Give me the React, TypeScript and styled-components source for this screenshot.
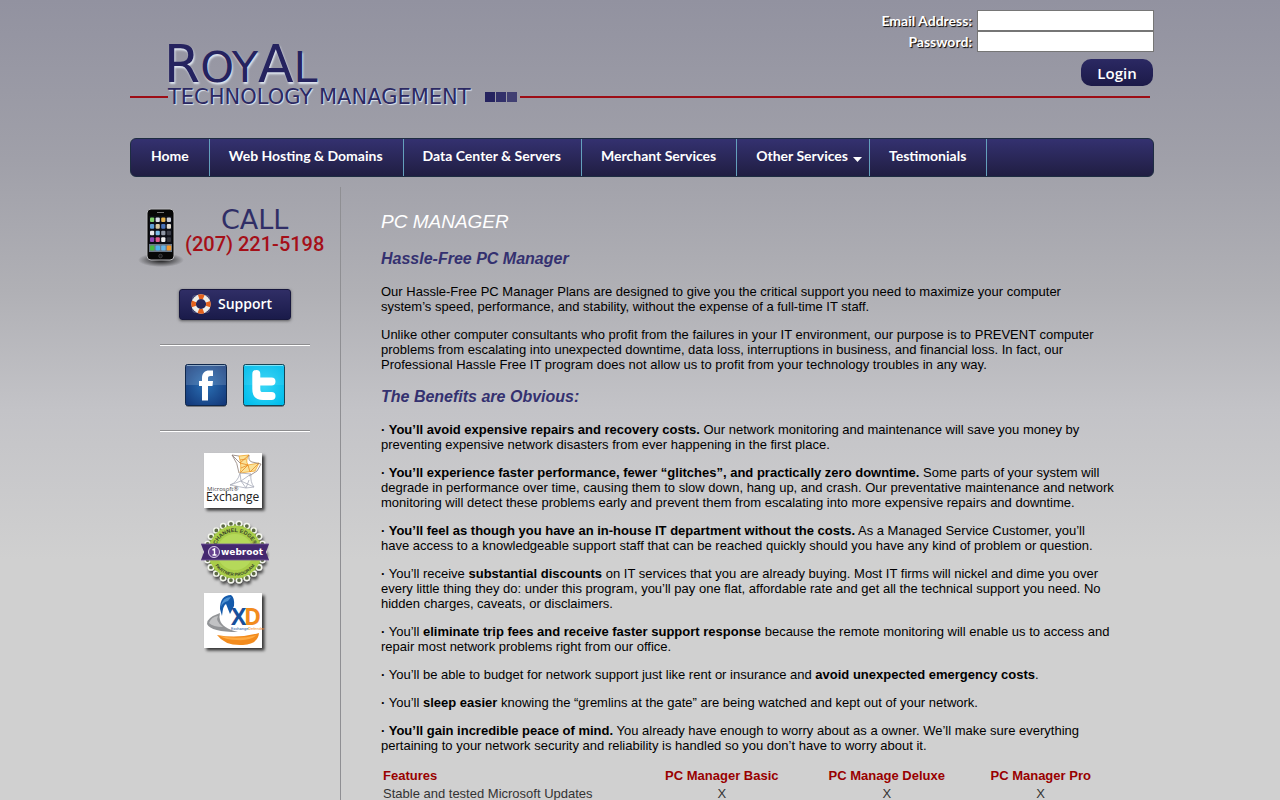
import React from "react";
import styled, { createGlobalStyle } from "styled-components";

const GlobalStyle = createGlobalStyle`
  * { box-sizing: border-box; }
  html { background: #d0d0d0; }
  body {
    margin: 0;
    background: linear-gradient(#9292a0 0, #a0a0a9 160px, #b0b0b5 290px, #c3c3c7 410px, #d0d0d0 560px) no-repeat;
    font: 13px/15px "Liberation Sans", Arial, sans-serif;
    color: #000;
  }
`;

const Shell = styled.div`
  max-width: 1020px;
  margin: 0 auto;
`;

const Header = styled.header`
  display: grid;
  height: 138px;
  > * { grid-area: 1 / 1; }
`;

const Brand = styled.div`
  padding-top: 40px;
`;

const Royal = styled.div`
  padding-left: 34px;
  height: 48px;
  font: 43px/48px "DejaVu Sans", sans-serif;
  color: #25235f;
  text-shadow: 1px 2px 2px #dfe6f0;
  span { font-size: 52px; }
`;

const TagRow = styled.div`
  display: flex;
  align-items: center;
  height: 18px;
`;

const Rule = styled.span<{ $fill?: boolean }>`
  flex: ${(p) => (p.$fill ? "1" : "0 0 38px")};
  height: 2px;
  background: #9d0d15;
`;

const Tagline = styled.span`
  flex: 0 0 317px;
  white-space: nowrap;
  font: 21px/18px "DejaVu Sans", sans-serif;
  color: #2b2963;
  text-shadow: 1px 1px 1px #dfe6f0;
`;

const Squares = styled.span`
  display: flex;
  gap: 1px;
  margin-right: 3px;
  i { width: 10px; height: 10px; background: #25235f; }
  i:nth-child(2) { background: #32306a; }
  i:nth-child(3) { background: #413f72; }
`;

const LoginForm = styled.form`
  justify-self: end;
  align-self: start;
  display: grid;
  grid-template-columns: auto 177px;
  column-gap: 5px;
  margin: 10px -4px 0 0;
`;

const Label = styled.label`
  text-align: right;
  font: bold 14px/21px Lato, sans-serif;
  color: #fff;
  text-shadow: 1px 1px 1px #000;
`;

const Field = styled.input`
  width: 100%;
  height: 21px;
  border: 1px solid #767676;
  background: #fff;
  padding: 1px 2px;
`;

const LoginButton = styled.button`
  grid-column: 2;
  justify-self: end;
  width: 72px;
  height: 27px;
  margin: 7px 1px 0 0;
  padding: 0;
  border: 0;
  border-radius: 10px;
  background: linear-gradient(#2b2963, #1c1a48);
  color: #fff;
  font: 600 15px/26px "Open Sans", sans-serif;
`;

const Nav = styled.nav`
  display: flex;
  height: 39px;
  margin-right: -4px;
  border: 1px solid #1e2d42;
  border-radius: 6px;
  background: linear-gradient(#343170, #201e42);
`;

const NavLink = styled.a<{ $menu?: boolean }>`
  display: flex;
  align-items: center;
  gap: 5px;
  height: 37px;
  padding: 0 ${(p) => (p.$menu ? "7px" : "20px")} 3px 19px;
  border-right: 1px solid #64a0bd;
  color: #fff;
  text-decoration: none;
  white-space: nowrap;
  font: bold 14px/20px Lato, sans-serif;
  &:first-child { padding-left: 20px; }
  svg { margin-top: 6px; }
`;

const Columns = styled.div`
  display: flex;
  min-height: 613px;
  padding-top: 10px;
`;

const Sidebar = styled.aside`
  flex: 0 0 211px;
  display: flex;
  flex-direction: column;
  align-items: center;
  border-right: 1px solid #8f8f93;
  padding-top: 21px;
`;

const CallBox = styled.div`
  display: flex;
  align-items: flex-start;
  height: 59px;
  width: 194px;
  > svg { flex: none; }
`;

const CallText = styled.div`
  text-align: center;
  color: #302e66;
  font: 27px/24px "DejaVu Sans", sans-serif;
  white-space: nowrap;
  strong {
    display: block;
    color: #a50f18;
    font: 500 20px/24px Roboto, sans-serif;
  }
`;

const SupportButton = styled.button`
  display: flex;
  align-items: center;
  gap: 7px;
  width: 112px;
  height: 31px;
  margin: 22px 0 24px;
  padding: 0 11px 1px;
  border: 1px solid #17173d;
  border-radius: 3px;
  background: linear-gradient(#302e66, #1a1b4a);
  box-shadow: 0 1px 3px rgba(0, 0, 0, 0.5);
  color: #fff;
  font: 600 14px/20px "Open Sans", sans-serif;
`;

const Separator = styled.hr`
  width: 150px;
  height: 2px;
  margin: 0;
  border: 0;
  border-top: 1px solid #8d8d8f;
  background: #fff;
`;

const Social = styled.div`
  display: flex;
  gap: 16px;
  margin: 18px 0 22px;
  a { display: block; width: 42px; height: 44px; }
  svg { display: block; }
`;

const Partners = styled.div`
  display: flex;
  flex-direction: column;
  align-items: center;
  margin-top: 18px;
  svg { display: block; }
`;

const Main = styled.main`
  flex: 1;
  padding: 23px 36px 0 40px;
`;

const Title = styled.h1`
  margin: 0 0 16px;
  font: italic 19px/24px "Liberation Sans", Arial, sans-serif;
  color: #fff;
`;

const Subtitle = styled.h2`
  margin: 16px 0;
  font: italic bold 16px/18px "Liberation Sans", Arial, sans-serif;
  color: #343170;
`;

const Text = styled.p`
  margin: 0 0 13px;
`;

const Features = styled.table`
  width: 100%;
  table-layout: fixed;
  border-collapse: collapse;
  color: #333;
  th, td { height: 18px; padding: 0 2px; text-align: center; }
  th { color: #990000; }
  th:first-child, td:first-child { width: 35%; text-align: left; }
  th:nth-child(2) { width: 23%; }
  th:nth-child(3) { width: 22%; }
`;

const appColors = [
  "#7fcf6a", "#d9dde8", "#e6b34d", "#c8ced9",
  "#5f9fd8", "#d8c9a0", "#4a73b8", "#e2ddd0",
  "#e8e8ea", "#7cbde8", "#8f96a3", "#3c3f49",
  "#8d46b4", "#e05a8c", "#f0f0f0", "#31343c",
];

const PhoneIcon = () => (
  <svg width="47" height="60" viewBox="0 0 47 60" aria-hidden="true">
    <defs>
      <radialGradient id="phoneShadow">
        <stop offset="0" stopColor="#000" stopOpacity="0.9" />
        <stop offset="1" stopColor="#000" stopOpacity="0" />
      </radialGradient>
    </defs>
    <ellipse cx="23" cy="52" rx="23" ry="7" fill="url(#phoneShadow)" />
    <rect x="9" y="1" width="27" height="51" rx="4" fill="#070707" stroke="#b9b9bd" />
    <rect x="19" y="4" width="7" height="1" fill="#777" />
    <rect x="11" y="8" width="23" height="36" fill="#0d0f16" />
    {appColors.map((c, i) => (
      <rect key={i} x={12 + (i % 4) * 5.6} y={9.5 + Math.floor(i / 4) * 6.6} width="4.2" height="4.6" rx="1" fill={c} />
    ))}
    <rect x="11" y="36" width="23" height="8" fill="#6b7887" />
    {["#48ba40", "#4db1ee", "#65b5e8", "#f39a2c"].map((c, i) => (
      <rect key={c} x={12 + i * 5.6} y="37.5" width="4.4" height="5" rx="1" fill={c} />
    ))}
    <circle cx="22.5" cy="48" r="1.8" fill="#17181c" stroke="#555" strokeWidth="0.6" />
  </svg>
);

const LifeRing = () => (
  <svg width="20" height="20" viewBox="0 0 20 20" aria-hidden="true">
    <rect x="1.5" y="1.5" width="17" height="17" rx="3" fill="none" stroke="#6c7396" strokeWidth="0.7" />
    <circle cx="10" cy="10" r="7.4" fill="none" stroke="#eeeeea" strokeWidth="4.6" />
    <circle cx="10" cy="10" r="7.4" fill="none" stroke="#e4611c" strokeWidth="4.6" strokeDasharray="5.2 6.42" strokeDashoffset="2.6" />
  </svg>
);

const FacebookIcon = () => (
  <svg width="42" height="44" viewBox="0 0 42 44" aria-hidden="true">
    <defs>
      <radialGradient id="fb" cx="0.5" cy="0.5" r="0.7">
        <stop offset="0" stopColor="#2a70b5" />
        <stop offset="1" stopColor="#123475" />
      </radialGradient>
    </defs>
    <rect x="1" y="2" width="40" height="41" rx="2" fill="#333" opacity="0.5" />
    <rect x="0.5" y="0.5" width="41" height="41" rx="2" fill="url(#fb)" stroke="#10284c" />
    <path d="M1 1H41V21H1Z" fill="#fff" opacity="0.15" />
    <path d="M2 1.5H40" stroke="#8ca9c8" />
    <path d="M17 36.5V22h-3v-5h3v-3c0-5 3-7.5 7-7.5h4V12h-2.5c-1.8 0-2.5.8-2.5 2.4V17h5l-.5 5H23v14.5Z" fill="#fff" />
  </svg>
);

const TwitterIcon = () => (
  <svg width="42" height="44" viewBox="0 0 42 44" aria-hidden="true">
    <defs>
      <radialGradient id="tw" cx="0.5" cy="0.55" r="0.6">
        <stop offset="0" stopColor="#36d5f5" />
        <stop offset="1" stopColor="#00bdec" />
      </radialGradient>
    </defs>
    <rect x="1" y="2" width="40" height="41" rx="2" fill="#333" opacity="0.5" />
    <rect x="0.5" y="0.5" width="41" height="41" rx="2" fill="url(#tw)" stroke="#174353" />
    <path d="M1 1H41V21H1Z" fill="#fff" opacity="0.08" />
    <path d="M2 1.5H40" stroke="#7ee4f8" />
    <path d="M13.3 10V25Q13.3 32 20 32H28.5M13.3 17.5H28.5" fill="none" stroke="#fff" strokeWidth="8" strokeLinecap="round" strokeLinejoin="round" />
  </svg>
);

const Card = ({ children }: { children: React.ReactNode }) => (
  <svg width="70" height="68" viewBox="0 0 70 68">
    <defs>
      <filter id="cardShadow" x="-20%" y="-20%" width="150%" height="150%">
        <feDropShadow dx="2.5" dy="2.5" stdDeviation="1.6" floodColor="#000" floodOpacity="0.75" />
      </filter>
    </defs>
    <rect x="4" y="3" width="58" height="55" fill="#fff" filter="url(#cardShadow)" />
    {children}
  </svg>
);

const ExchangeLogo = () => (
  <Card>
    <g fill="none" strokeWidth="0.8" strokeLinejoin="round">
      <path d="M39 6 49 5Q45 10 48 15L59 13 55 21 40 23Q42 17 39 6Z" fill="#fae29a" stroke="#f0a52a" />
      <path d="M49 5 40 13 48 15 40 23M41 18 48 15 50 22 59 13M40 10 46 9" stroke="#e88a22" />
      <path d="M32 5 39 6M32 5Q38 13 39 23M32 5 40 13M49 5Q48 11 52 12L61 14 57 21 49 26" stroke="#8e7f78" />
      <path d="M40 23Q38 32 30 35L46 38M40 23 51 24Q50 32 54 37L46 38 41 31 30 35M40 23 41 31 51 24M41 31 54 37M49 30 46 38" stroke="#a7abb9" />
    </g>
    <text x="7" y="41" fontFamily="Open Sans, sans-serif" fontSize="6" fill="#444">Microsoft®</text>
    <text x="6" y="51" fontFamily="Open Sans, sans-serif" fontSize="12" fill="#222">Exchange</text>
  </Card>
);

const WebrootBadge = () => (
  <svg width="70" height="72" viewBox="0 0 70 72">
    <defs>
      <path id="arcTop" d="M15 34A20 20 0 0 1 55 34" />
      <path id="arcBottom" d="M11 34A24 24 0 0 0 59 34" />
      <filter id="badgeShadow" x="-20%" y="-20%" width="140%" height="150%">
        <feDropShadow dx="1" dy="3" stdDeviation="1.5" floodOpacity="0.65" />
      </filter>
    </defs>
    <g filter="url(#badgeShadow)">
      <circle cx="35" cy="34" r="28" fill="#7b9b3e" />
      {Array.from({ length: 22 }, (_, i) => {
        const a = (i * Math.PI * 2) / 22;
        return (
          <circle key={i} cx={35 + Math.cos(a) * 28.5} cy={34 + Math.sin(a) * 28.5} r="2.6" fill="#5d6b45" stroke="#f4f6ee" strokeWidth="1.4" />
        );
      })}
      <circle cx="35" cy="34" r="26.5" fill="#a9cd4a" />
    </g>
    <circle cx="35" cy="34" r="18" fill="#b5d95a" />
    <g fontFamily="Liberation Sans, sans-serif" fontWeight="bold" fill="#39452a">
      <text fontSize="5.5" textAnchor="middle"><textPath href="#arcTop" startOffset="50%">CHANNEL EDGE®</textPath></text>
      <text fontSize="4.5" textAnchor="middle"><textPath href="#arcBottom" startOffset="50%">PARTNER PROGRAM</textPath></text>
    </g>
    <path d="M1 26H69L66 34 69 42H1L4 34Z" fill="#44286f" />
    <path d="M1 26H69M1 42H69" stroke="#73599a" strokeWidth="0.8" />
    <circle cx="14" cy="34" r="5.5" fill="#65408f" stroke="#ddd1eb" />
    <path d="M12.5 32 14.5 31V37M12.5 37H16.5" stroke="#fff" strokeWidth="1.4" fill="none" />
    <text x="21" y="37" fontFamily="DejaVu Sans, sans-serif" fontWeight="bold" fontSize="9" fill="#fff">webroot</text>
  </svg>
);

const DefenderLogo = () => (
  <Card>
    <path d="M20 19Q20 5 31 5 35 8 34 16L30 24 26 14Q23 15 22 26Z" fill="#145aab" />
    <path d="M21 17Q22 7 31 7L28 11Q23 12 21 17Z" fill="#4d91d2" />
    <path d="M20 23Q6 28 7 34 11 42 38 42 22 38 20 30Q19 27 20 23Z" fill="#929497" />
    <path d="M9 33Q11 27 18 26 15 31 23 37 13 37 9 33Z" fill="#c1c2c4" />
    <path d="M17 45Q38 49 59 43 58 54 43 55 25 56 17 45Z" fill="#f28b1d" />
    <path d="M20 46Q39 50 57 45 50 51 37 50 26 50 20 46Z" fill="#ffab42" />
    <g fontFamily="Open Sans, sans-serif" fontWeight="bold" fontSize="23">
      <text x="31" y="35" fill="#174f9c">X</text>
      <text x="44" y="35" fill="#f28b1d">D</text>
    </g>
    <text x="31" y="40" fontFamily="Roboto, sans-serif" fontSize="4" fill="#2760a5">
      Exchange<tspan fill="#f28b1d">Defender</tspan>
    </text>
  </Card>
);

const links = ["Home", "Web Hosting & Domains", "Data Center & Servers", "Merchant Services", "Other Services", "Testimonials"];

export default function App() {
  return (
    <>
      <GlobalStyle />
      <Shell>
        <Header>
          <Brand>
            <Royal><span>R</span>OY<span>A</span>L</Royal>
            <TagRow>
              <Rule />
              <Tagline>TECHNOLOGY MANAGEMENT</Tagline>
              <Squares><i /><i /><i /></Squares>
              <Rule $fill />
            </TagRow>
          </Brand>
          <LoginForm onSubmit={(e) => e.preventDefault()}>
            <Label htmlFor="email">Email Address:</Label>
            <Field id="email" type="text" />
            <Label htmlFor="password">Password:</Label>
            <Field id="password" type="password" />
            <LoginButton type="submit">Login</LoginButton>
          </LoginForm>
        </Header>
        <Nav>
          {links.map((name) => (
            <NavLink key={name} href="#" $menu={name === "Other Services"}>
              {name}
              {name === "Other Services" && (
                <svg width="9" height="5" viewBox="0 0 9 5" aria-hidden="true"><path d="M0 0H9L4.5 5Z" fill="#fff" /></svg>
              )}
            </NavLink>
          ))}
        </Nav>
        <Columns>
          <Sidebar>
            <CallBox>
              <PhoneIcon />
              <CallText>CALL<strong>(207) 221-5198</strong></CallText>
            </CallBox>
            <SupportButton type="button"><LifeRing />Support</SupportButton>
            <Separator />
            <Social>
              <a href="#" aria-label="Facebook"><FacebookIcon /></a>
              <a href="#" aria-label="Twitter"><TwitterIcon /></a>
            </Social>
            <Separator />
            <Partners>
              <ExchangeLogo />
              <WebrootBadge />
              <DefenderLogo />
            </Partners>
          </Sidebar>
          <Main>
            <Title>PC MANAGER</Title>
            <Subtitle>Hassle-Free PC Manager</Subtitle>
            <Text>Our Hassle-Free PC Manager Plans are designed to give you the critical support you need to maximize your computer system’s speed, performance, and stability, without the expense of a full-time IT staff.</Text>
            <Text>Unlike other computer consultants who profit from the failures in your IT environment, our purpose is to PREVENT computer problems from escalating into unexpected downtime, data loss, interruptions in business, and financial loss. In fact, our Professional Hassle Free IT program does not allow us to profit from your technology troubles in any way.</Text>
            <Subtitle>The Benefits are Obvious:</Subtitle>
            <Text><b>· You’ll avoid expensive repairs and recovery costs.</b> Our network monitoring and maintenance will save you money by preventing expensive network disasters from ever happening in the first place.</Text>
            <Text><b>· You’ll experience faster performance, fewer “glitches”, and practically zero downtime.</b> Some parts of your system will degrade in performance over time, causing them to slow down, hang up, and crash. Our preventative maintenance and network monitoring will detect these problems early and prevent them from escalating into more expensive repairs and downtime.</Text>
            <Text><b>· You’ll feel as though you have an in-house IT department without the costs.</b> As a Managed Service Customer, you’ll have access to a knowledgeable support staff that can be reached quickly should you have any kind of problem or question.</Text>
            <Text><b>·</b> You’ll receive <b>substantial discounts</b> on IT services that you are already buying. Most IT firms will nickel and dime you over every little thing they do: under this program, you’ll pay one flat, affordable rate and get all the technical support you need. No hidden charges, caveats, or disclaimers.</Text>
            <Text><b>·</b> You’ll <b>eliminate trip fees and receive faster support response</b> because the remote monitoring will enable us to access and repair most network problems right from our office.</Text>
            <Text><b>·</b> You’ll be able to budget for network support just like rent or insurance and <b>avoid unexpected emergency costs</b>.</Text>
            <Text><b>·</b> You’ll <b>sleep easier</b> knowing the “gremlins at the gate” are being watched and kept out of your network.</Text>
            <Text><b>· You’ll gain incredible peace of mind.</b> You already have enough to worry about as a owner. We’ll make sure everything pertaining to your network security and reliability is handled so you don’t have to worry about it.</Text>
            <Features>
              <thead>
                <tr><th scope="col">Features</th><th scope="col">PC Manager Basic</th><th scope="col">PC Manage Deluxe</th><th scope="col">PC Manager Pro</th></tr>
              </thead>
              <tbody>
                <tr><td>Stable and tested Microsoft Updates</td><td>X</td><td>X</td><td>X</td></tr>
              </tbody>
            </Features>
          </Main>
        </Columns>
      </Shell>
    </>
  );
}
